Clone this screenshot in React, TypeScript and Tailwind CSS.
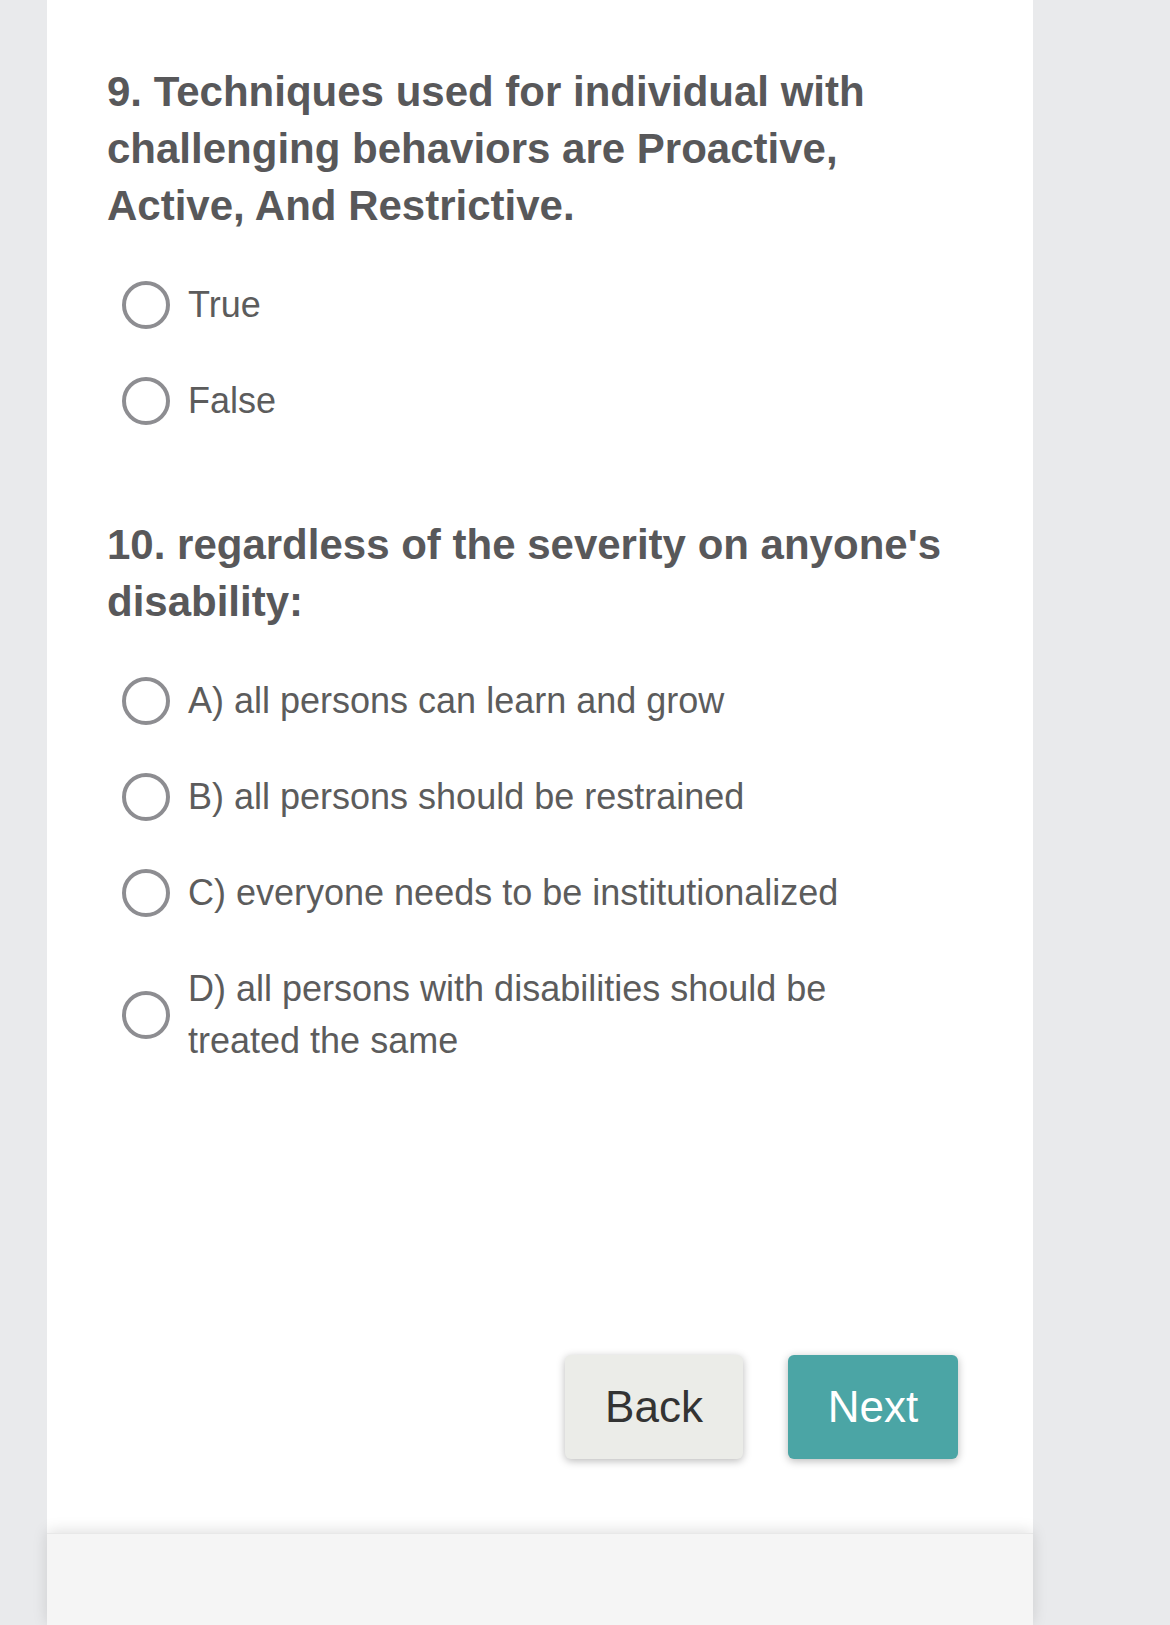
import React from "react";

const font = { fontFamily: '"Liberation Sans", Arial, Helvetica, sans-serif' };

function Option({ label }: { label: string }) {
  return (
    <div className="flex items-center pl-[15px] mt-[44px] first:mt-0">
      <span className="shrink-0 w-[48px] h-[48px] rounded-full border-[4px] border-[#8d8d91] bg-white" />
      <span className="ml-[18px] max-w-[690px] text-[36px] leading-[52px] text-[#5c5c5c]">
        {label}
      </span>
    </div>
  );
}

function Question({ title, options }: { title: string; options: string[] }) {
  return (
    <div>
      <h2 className="text-[42px] leading-[57px] font-bold text-[#58585a]">{title}</h2>
      <div className="mt-[45px] flex flex-col">
        {options.map((o) => (
          <Option key={o} label={o} />
        ))}
      </div>
    </div>
  );
}

export default function App() {
  return (
    <div className="w-[1170px] h-[1625px] overflow-hidden bg-[#e9eaec]" style={font}>
      <div className="ml-[47px] w-[986px] flex flex-col h-full">
        <div className="bg-white h-[1533px] shrink-0 px-[60px] pt-[63px] relative">
          <Question
            title="9. Techniques used for individual with challenging behaviors are Proactive, Active, And Restrictive."
            options={["True", "False"]}
          />
          <div className="mt-[89px]">
            <Question
              title="10. regardless of the severity on anyone's disability:"
              options={[
                "A) all persons can learn and grow",
                "B) all persons should be restrained",
                "C) everyone needs to be institutionalized",
                "D) all persons with disabilities should be treated the same",
              ]}
            />
          </div>
          <div className="mt-[288px] flex justify-end gap-[45px] pr-[15px]">
            <button className="w-[178px] h-[104px] rounded-[6px] bg-[#ebece8] text-[#333333] text-[44px] shadow-[0_2px_8px_rgba(0,0,0,0.28)]">
              Back
            </button>
            <button className="w-[170px] h-[104px] rounded-[6px] bg-[#4ba5a5] text-white text-[44px] shadow-[0_2px_8px_rgba(0,0,0,0.28)]">
              Next
            </button>
          </div>
        </div>
        <div className="flex-1 bg-[#f5f5f5] border-t border-[#e8e8e8] shadow-[0_-2px_14px_rgba(0,0,0,0.13)] relative" />
      </div>
    </div>
  );
}
